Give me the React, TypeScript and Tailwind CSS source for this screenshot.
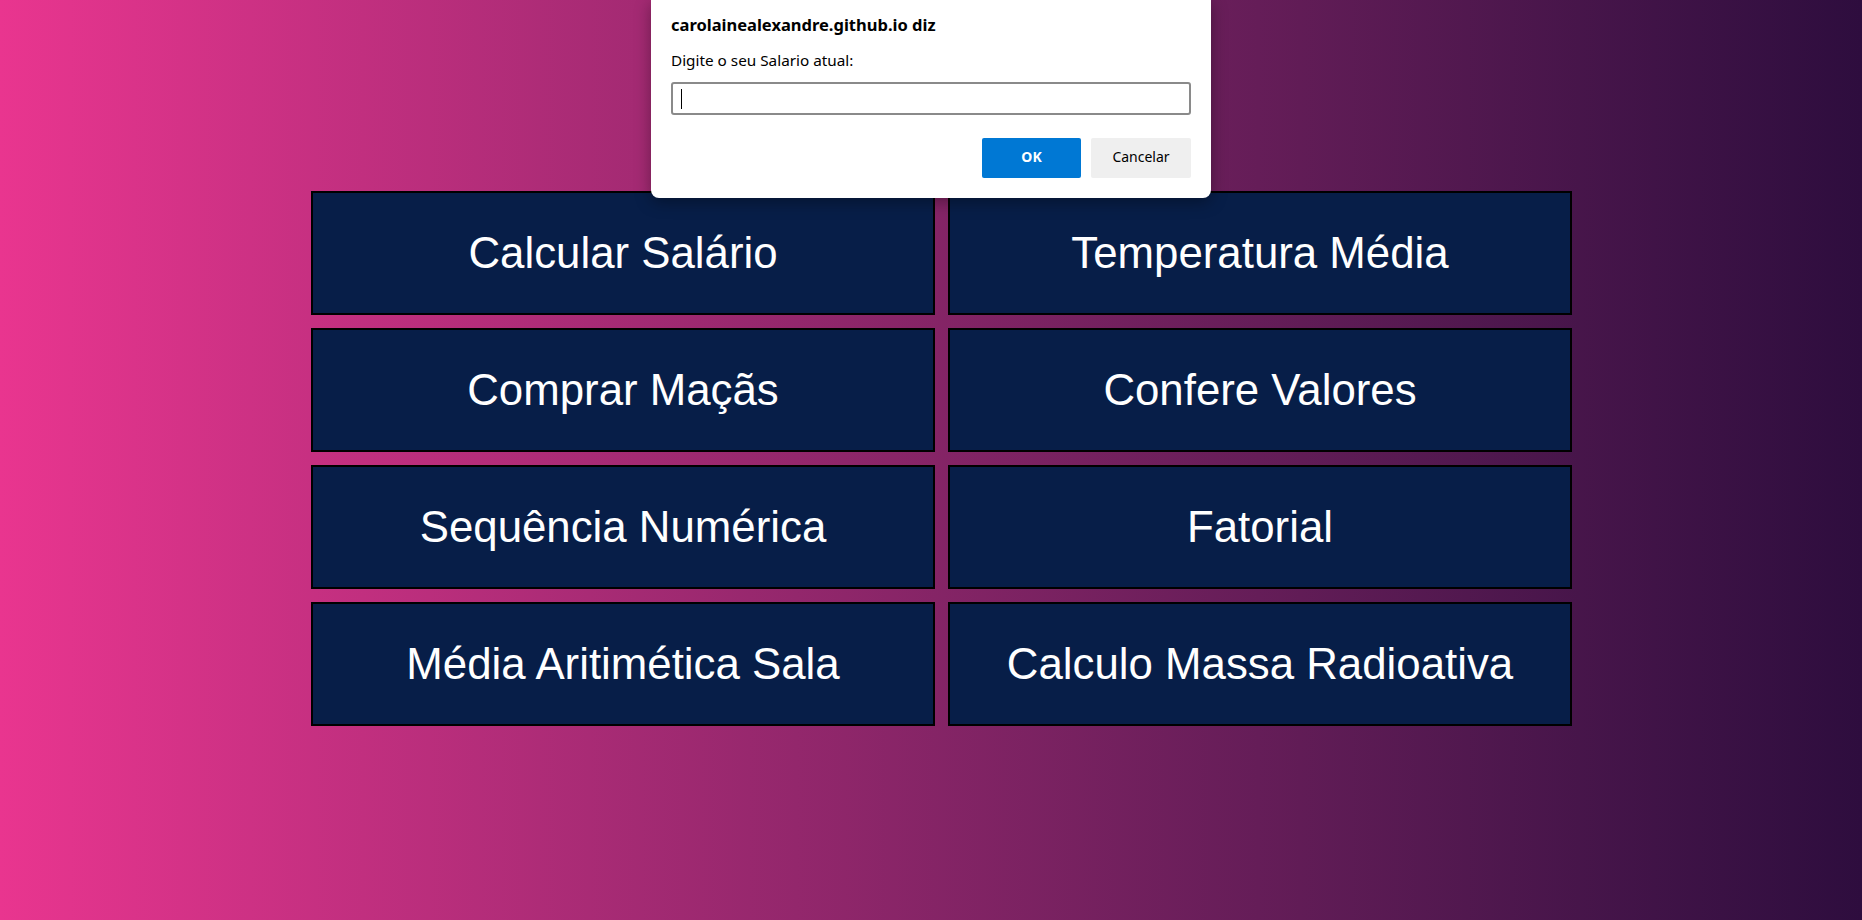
import React from 'react';

const App: React.FC = () => {
  const options = [
    'Calcular Salário',
    'Temperatura Média',
    'Comprar Maçãs',
    'Confere Valores',
    'Sequência Numérica',
    'Fatorial',
    'Média Aritimética Sala',
    'Calculo Massa Radioativa'
  ];

  return (
    <div className="relative w-full h-[920px] overflow-hidden bg-gradient-to-r from-[#e9358f] to-[#2e0d3e]">
      {/* Menu */}
      <div className="pt-[191px] pl-[311px]">
        <div className="grid grid-cols-[624px_624px] gap-x-[13px] gap-y-[13px]">
          {options.map((label) => (
            <button
              key={label}
              className="h-[124px] bg-[#071e48] border-2 border-black flex items-center justify-center text-white text-[43.8px] font-['Liberation_Sans',Arial,sans-serif]"
            >
              {label}
            </button>
          ))}
        </div>
      </div>

      {/* Browser prompt */}
      <div className="absolute left-[651px] top-0 w-[560px] h-[198px] bg-white rounded-b-lg shadow-[0_4px_16px_rgba(0,0,0,0.35)] px-5 font-['Noto_Sans',sans-serif] text-black">
        <p className="pt-[14px] text-[16.5px] leading-[22px] font-bold">carolainealexandre.github.io diz</p>
        <p className="mt-[14px] text-[15.3px] leading-5">Digite o seu Salario atual:</p>
        <div className="mt-[12px] h-[33px] border-2 border-[#8a8a8a] rounded-[3px] flex items-center pl-[8px]">
          <span className="w-px h-[20px] bg-black" />
        </div>
        <div className="mt-[23px] flex justify-end gap-[10px]">
          <button className="w-[99px] h-[40px] rounded-[2px] bg-[#0078d4] text-white text-[14px] font-bold leading-none pb-[2px]">OK</button>
          <button className="w-[100px] h-[40px] rounded-[2px] bg-[#efefef] text-black text-[14px] leading-none pb-[2px]">Cancelar</button>
        </div>
      </div>
    </div>
  );
};

export default App;
